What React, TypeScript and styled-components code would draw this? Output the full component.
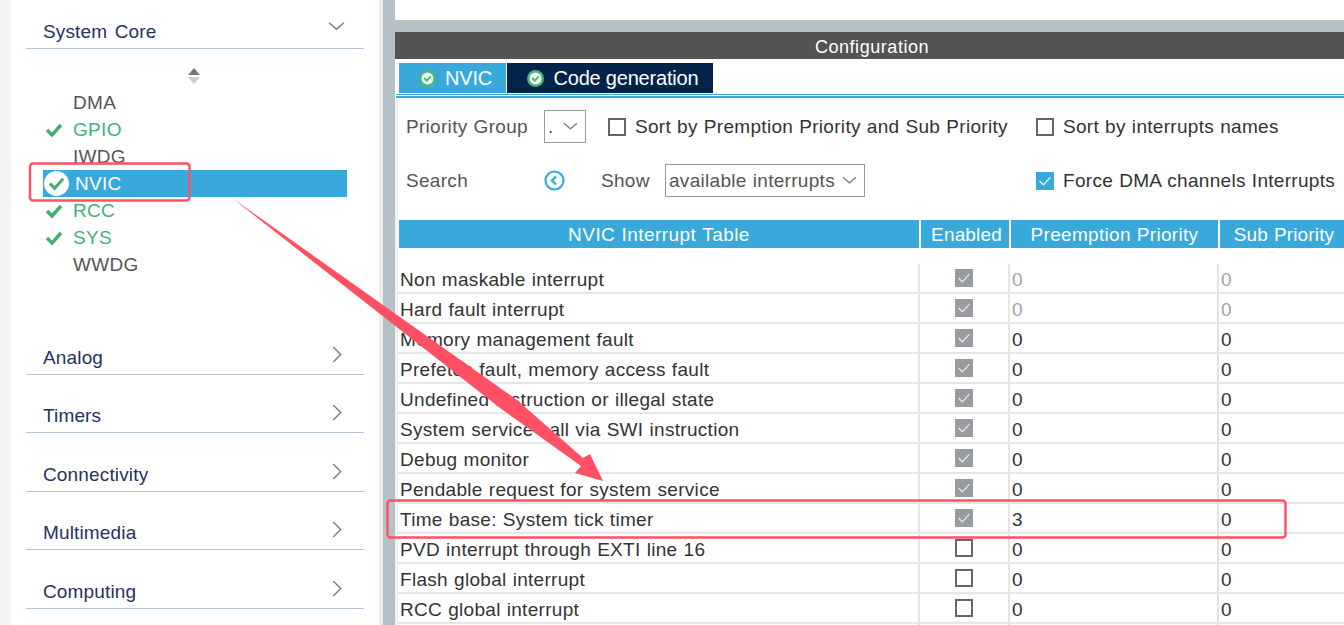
import React from "react";
import styled, { createGlobalStyle } from "styled-components";

const GlobalStyle = createGlobalStyle`
  html, body {
    margin: 0;
    padding: 0;
    background: #fff;
    font-family: "Liberation Sans", Arial, sans-serif;
  }
`;

const peripherals = [
  { name: "DMA", state: "none" },
  { name: "GPIO", state: "ok" },
  { name: "IWDG", state: "none" },
  { name: "NVIC", state: "selected" },
  { name: "RCC", state: "ok" },
  { name: "SYS", state: "ok" },
  { name: "WWDG", state: "none" },
];

const sections = ["Analog", "Timers", "Connectivity", "Multimedia", "Computing"];

const interrupts = [
  { name: "Non maskable interrupt", on: true, pre: "0", sub: "0", dim: true },
  { name: "Hard fault interrupt", on: true, pre: "0", sub: "0", dim: true },
  { name: "Memory management fault", on: true, pre: "0", sub: "0" },
  { name: "Prefetch fault, memory access fault", on: true, pre: "0", sub: "0" },
  { name: "Undefined instruction or illegal state", on: true, pre: "0", sub: "0" },
  { name: "System service call via SWI instruction", on: true, pre: "0", sub: "0" },
  { name: "Debug monitor", on: true, pre: "0", sub: "0" },
  { name: "Pendable request for system service", on: true, pre: "0", sub: "0" },
  { name: "Time base: System tick timer", on: true, pre: "3", sub: "0" },
  { name: "PVD interrupt through EXTI line 16", on: false, pre: "0", sub: "0" },
  { name: "Flash global interrupt", on: false, pre: "0", sub: "0" },
  { name: "RCC global interrupt", on: false, pre: "0", sub: "0" },
];

const Chevron = ({ dir, size }: { dir: "down" | "right"; size: number }) => (
  <svg width={size} height={size} viewBox="0 0 16 16" fill="none" stroke="#808080" strokeWidth="1.4">
    {dir === "down" ? <path d="M1 4.5l7 6 7-6" /> : <path d="M4 1l7 7-7 7" />}
  </svg>
);

const Tick = ({ color = "#44ad72", size = 18, width = 3.4 }: { color?: string; size?: number; width?: number }) => (
  <svg width={size} height={size} viewBox="0 0 18 18" fill="none" stroke={color} strokeWidth={width}>
    <path d="M2 9l5 5 9-10" />
  </svg>
);

const BadgeIcon = () => (
  <svg width="17" height="17" viewBox="0 0 17 17">
    <circle cx="8.5" cy="8.5" r="8.5" fill="#4bb679" />
    <circle cx="8.5" cy="8.5" r="6" fill="#eaf6ef" />
    <path d="M5.2 8l2.6 2.6 4-4.2" fill="none" stroke="#4bb679" strokeWidth="1.8" />
  </svg>
);

const App = () => (
  <Page>
    <GlobalStyle />
    <Gutter />
    <Sidebar>
      <SectionHead $first>
        <SectionTitle>System Core</SectionTitle>
        <ChevronSlot $down>
          <Chevron dir="down" size={17} />
        </ChevronSlot>
      </SectionHead>
      <SectionBody>
        <SortArrows>
          <SortUp />
          <SortDown />
        </SortArrows>
        <PeripheralList>
          {peripherals.map((p) => (
            <PeripheralRow key={p.name} $selected={p.state === "selected"}>
              <StatusSlot>
                {p.state === "ok" && <Tick />}
                {p.state === "selected" && (
                  <WhiteDisc>
                    <Tick size={17} width={3.2} />
                  </WhiteDisc>
                )}
              </StatusSlot>
              <PeripheralName $state={p.state}>{p.name}</PeripheralName>
            </PeripheralRow>
          ))}
        </PeripheralList>
      </SectionBody>
      {sections.map((s) => (
        <SectionHead key={s}>
          <SectionTitle>{s}</SectionTitle>
          <ChevronSlot>
            <Chevron dir="right" size={17} />
          </ChevronSlot>
        </SectionHead>
      ))}
    </Sidebar>
    <Divider />
    <Main>
      <TopBlank />
      <Strip />
      <ConfigBar>Configuration</ConfigBar>
      <Tabs>
        <Tab $active>
          <BadgeIcon />
          NVIC
        </Tab>
        <Tab>
          <BadgeIcon />
          Code generation
        </Tab>
      </Tabs>
      <TabRule />
      <Content>
        <ToolRow>
          <ToolGroup>
            <ToolLabel $width={138}>Priority Group</ToolLabel>
            <SelectBox $width={42}>
              <SelectValue>.</SelectValue>
              <Chevron dir="down" size={15} />
            </SelectBox>
            <CheckLabel $left={22}>
              <CheckBox />
              <LabelText>Sort by Premption Priority and Sub Priority</LabelText>
            </CheckLabel>
          </ToolGroup>
          <CheckLabel>
            <CheckBox />
            <LabelText>Sort by interrupts names</LabelText>
          </CheckLabel>
        </ToolRow>
        <ToolRow>
          <ToolGroup>
            <ToolLabel $width={138}>Search</ToolLabel>
            <SearchIcon>
              <svg width="21" height="21" viewBox="0 0 21 21" fill="none">
                <circle cx="10.5" cy="10.5" r="9" stroke="#3aa9dc" strokeWidth="2.2" />
                <path d="M12 6.5l-4 4 4 4" stroke="#3aa9dc" strokeWidth="2.4" />
              </svg>
            </SearchIcon>
            <ToolLabel $width={64}>Show</ToolLabel>
            <SelectBox $width={200}>
              <SelectValue>available interrupts</SelectValue>
              <Chevron dir="down" size={15} />
            </SelectBox>
          </ToolGroup>
          <CheckLabel>
            <CheckBox $checked>
              <Tick color="#fff" size={14} width={1.6} />
            </CheckBox>
            <LabelText>Force DMA channels Interrupts</LabelText>
          </CheckLabel>
        </ToolRow>
        <TableHead>
          <HeadCell $wide>NVIC Interrupt Table</HeadCell>
          <HeadCell $nudge={3}>Enabled</HeadCell>
          <HeadCell>Preemption Priority</HeadCell>
          <HeadCell $nudge={4}>Sub Priority</HeadCell>
        </TableHead>
        <TableBody>
          {interrupts.map((r) => (
            <TableRow key={r.name}>
              <NameCell>{r.name}</NameCell>
              <EnabledCell>
                <CheckBox $disabled={r.on}>{r.on && <Tick color="#e9ecee" size={14} width={1.6} />}</CheckBox>
              </EnabledCell>
              <ValueCell $dim={r.dim}>{r.pre}</ValueCell>
              <ValueCell $dim={r.dim} $last>
                {r.sub}
              </ValueCell>
            </TableRow>
          ))}
        </TableBody>
      </Content>
    </Main>
    <Annotations width="1344" height="625" viewBox="0 0 1344 625">
      <rect x="30" y="163.5" width="159.5" height="37" rx="3" fill="none" stroke="#ff5064" strokeWidth="2.4" />
      <rect x="387.5" y="500.5" width="898" height="37" rx="3" fill="none" stroke="#ff5064" strokeWidth="2.4" />
      <polygon
        points="232,198 517,400 583,458 590,454 603,481 575,473 581,466 500,408"
        fill="#ff5064"
      />
    </Annotations>
  </Page>
);

export default App;

const Page = styled.div`
  position: relative;
  display: flex;
  width: 1344px;
  height: 625px;
  overflow: hidden;
  background: #fff;
  letter-spacing: 0.3px;
  word-spacing: 0.5px;
`;

const Gutter = styled.div`
  width: 11px;
  flex: none;
  background: #f3f3f3;
`;

const Sidebar = styled.div`
  width: 338px;
  flex: none;
  padding: 0 15px;
`;

const SectionHead = styled.div<{ $first?: boolean }>`
  display: flex;
  justify-content: space-between;
  align-items: flex-end;
  height: ${(p) => (p.$first ? 49 : 58.5)}px;
  box-sizing: border-box;
  padding: 0 18px 5px 17px;
  border-bottom: 1px solid #b4c3d8;
  color: #26325f;
`;

const SectionTitle = styled.span`
  font-size: 19px;
  line-height: 22px;
  letter-spacing: 0.15px;
  word-spacing: 2px;
`;

const ChevronSlot = styled.span<{ $down?: boolean }>`
  display: flex;
  margin-right: ${(p) => (p.$down ? 1 : 0)}px;
  transform: translateY(${(p) => (p.$down ? -8 : -6)}px);
`;

const SectionBody = styled.div`
  height: 267px;
  padding-left: 17px;
`;

const SortArrows = styled.div`
  display: flex;
  flex-direction: column;
  align-items: center;
  gap: 2px;
  width: 302px;
  height: 40px;
  padding-top: 19px;
  box-sizing: border-box;
`;

const SortUp = styled.span`
  width: 0;
  height: 0;
  border: 6px solid transparent;
  border-top: 0;
  border-bottom: 7px solid #777;
`;

const SortDown = styled.span`
  width: 0;
  height: 0;
  border: 6px solid transparent;
  border-bottom: 0;
  border-top: 7px solid #ccc;
`;

const PeripheralList = styled.ul`
  list-style: none;
  margin: 0;
  padding: 0;
`;

const PeripheralRow = styled.li<{ $selected?: boolean }>`
  display: flex;
  align-items: center;
  width: 304px;
  height: 27px;
  background: ${(p) => (p.$selected ? "#39a9dc" : "transparent")};
`;

const StatusSlot = styled.span`
  display: flex;
  justify-content: flex-start;
  align-items: center;
  width: 30px;
  padding-left: 2px;
  box-sizing: border-box;
`;

const WhiteDisc = styled.span`
  display: flex;
  align-items: center;
  justify-content: center;
  width: 25px;
  height: 25px;
  margin-left: -1px;
  border-radius: 50%;
  background: #fff;
`;

const PeripheralName = styled.span<{ $state: string }>`
  font-size: 19px;
  margin-left: ${(p) => (p.$state === "selected" ? 2 : 0)}px;
  color: ${(p) => (p.$state === "selected" ? "#fff" : p.$state === "ok" ? "#45b078" : "#555")};
`;

const Divider = styled.div`
  width: 16px;
  flex: none;
  background: #b6c1c7;
  border-left: 4px solid #eceeef;
  box-sizing: border-box;
`;

const Main = styled.div`
  flex: 1;
  min-width: 0;
`;

const TopBlank = styled.div`
  height: 20px;
`;

const Strip = styled.div`
  height: 12px;
  background: #b6c1c7;
`;

const ConfigBar = styled.div`
  height: 27px;
  line-height: 30px;
  text-align: center;
  background: #535453;
  color: #fff;
  font-size: 18px;
  letter-spacing: 0.55px;
  padding-left: 5px;
`;

const Tabs = styled.div`
  display: flex;
  gap: 1px;
  padding: 4px 0 0 4px;
`;

const Tab = styled.div<{ $active?: boolean }>`
  display: flex;
  align-items: center;
  gap: 9px;
  height: 30px;
  box-sizing: border-box;
  padding: 0 14.5px 0 20px;
  font-size: 20px;
  letter-spacing: -0.2px;
  word-spacing: 0;
  color: #fff;
  background: ${(p) => (p.$active ? "#39a9dc" : "#03234b")};
`;

const TabRule = styled.div`
  height: 1px;
  margin: 1px 0 0 1px;
  background: #39a9dc;
  border-bottom: 1px solid #fff;
  box-shadow: 0 2px 0 #39a9dc;
`;

const Content = styled.div`
  margin-top: 3px;
  padding-top: 11px;
  border-left: 3px solid #f1f3f3;
  box-sizing: border-box;
  height: 600px;
`;

const ToolRow = styled.div`
  display: flex;
  align-items: center;
  height: 33px;
  margin-bottom: 21px;
  padding-left: 8px;
  color: #333;
  font-size: 19px;
`;

const ToolGroup = styled.div`
  display: flex;
  align-items: center;
  width: 630px;
  flex: none;
`;

const ToolLabel = styled.span<{ $width: number }>`
  width: ${(p) => p.$width}px;
  flex: none;
  padding-top: 1px;
  color: #555;
`;

const SelectBox = styled.div<{ $width: number }>`
  display: flex;
  align-items: center;
  justify-content: space-between;
  width: ${(p) => p.$width}px;
  height: 33px;
  flex: none;
  box-sizing: border-box;
  padding: 0 7px 0 3px;
  border: 1px solid #999;
  color: #555;
`;

const SelectValue = styled.span`
  padding-top: 1px;
`;

const CheckLabel = styled.label<{ $left?: number }>`
  display: flex;
  align-items: center;
  gap: 9px;
  margin-left: ${(p) => p.$left ?? 0}px;
  white-space: nowrap;
`;

const LabelText = styled.span`
  padding-top: 1px;
`;

const CheckBox = styled.span<{ $checked?: boolean; $disabled?: boolean }>`
  display: flex;
  align-items: center;
  justify-content: center;
  width: 18px;
  height: 18px;
  flex: none;
  box-sizing: border-box;
  border: ${(p) => (p.$checked || p.$disabled ? "none" : "2px solid #666")};
  background: ${(p) => (p.$checked ? "#39a9dc" : p.$disabled ? "#989ca1" : "#fff")};
`;

const SearchIcon = styled.span`
  display: flex;
  width: 57px;
  flex: none;
`;

const TableHead = styled.div`
  display: grid;
  grid-template-columns: 520px 88px 207px 1fr;
  gap: 2px;
  height: 28px;
  margin: 23px 0 16px 1px;
`;

const HeadCell = styled.div<{ $nudge?: number; $wide?: boolean }>`
  background: #39a9dc;
  color: #fff;
  font-size: 19px;
  line-height: 30px;
  letter-spacing: ${(p) => (p.$wide ? 0.45 : p.$nudge ? 0.15 : 0.3)}px;
  padding-left: ${(p) => p.$nudge ?? 0}px;
  text-align: center;
  white-space: nowrap;
  overflow: hidden;
`;

const TableBody = styled.div`
  display: flex;
  flex-direction: column;
`;

const TableRow = styled.div`
  display: grid;
  grid-template-columns: 522px 90px 209px 1fr;
  height: 30px;
  box-sizing: border-box;
  border-bottom: 2px solid #e6e6e6;
  color: #333;
  font-size: 19px;
`;

const NameCell = styled.div`
  padding-left: 2px;
  line-height: 31px;
  white-space: nowrap;
  border-right: 2px solid #e6e6e6;
`;

const EnabledCell = styled.div`
  display: flex;
  justify-content: center;
  align-items: center;
  padding-bottom: 4px;
  border-right: 2px solid #e6e6e6;
`;

const ValueCell = styled.div<{ $dim?: boolean; $last?: boolean }>`
  padding-left: 2px;
  line-height: 31px;
  color: ${(p) => (p.$dim ? "#a0a4a8" : "#333")};
  border-right: ${(p) => (p.$last ? "none" : "2px solid #e0e2e6")};
`;

const Annotations = styled.svg`
  position: absolute;
  inset: 0;
  pointer-events: none;
`;
